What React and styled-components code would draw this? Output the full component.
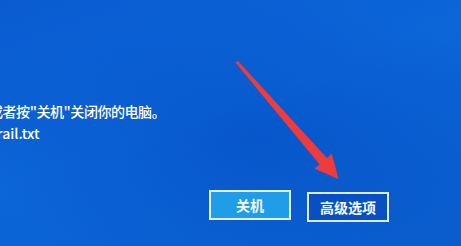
import React from 'react';
import styled, { createGlobalStyle } from 'styled-components';

const GlobalStyle = createGlobalStyle`
html, body {
margin: 0;
padding: 0;
}
body {
font-family: "Noto Sans CJK SC", "Noto Sans", sans-serif;
overflow: hidden;
}
`;

export const Screen = styled.div`
position: relative;
width: 461px;
height: 246px;
overflow: hidden;
display: flex;
flex-direction: column;
background:
  radial-gradient(ellipse 60% 55% at 55% 55%, rgba(4, 70, 190, 0.45), rgba(4, 70, 190, 0) 100%),
  linear-gradient(160deg, #0a5bd0 0%, #0b66d8 45%, #0a5ccc 100%);
color: #ffffff;
`;

export const Message = styled.div`
margin: 101px 0 0 -11px;
display: flex;
flex-direction: column;
gap: 2px;
`;

export const MessageLine = styled.div`
font-size: 14px;
line-height: 20px;
font-weight: 500;
white-space: nowrap;
letter-spacing: ${(p) => p.spacing || '0'};
margin-left: ${(p) => p.indent || '0'};
`;

export const ButtonRow = styled.div`
margin-top: auto;
margin-bottom: 24px;
padding-left: 209px;
display: flex;
gap: 16px;
align-items: flex-start;
`;

export const DialogButton = styled.div`
width: 82px;
height: 30px;
box-sizing: border-box;
display: flex;
align-items: center;
justify-content: center;
border: 2px solid rgba(240, 248, 255, 0.92);
background: ${(p) => (p.primary ? '#1f9de6' : 'rgba(5, 60, 170, 0.35)')};
margin-top: ${(p) => p.offset || '0'};
font-size: 14px;
font-weight: 600;
color: #f4f8ff;
`;

export const ArrowLayer = styled.svg`
position: absolute;
left: 0;
top: 0;
pointer-events: none;
`;

const App = () => {
    return (
        <>
            <GlobalStyle />
            <Screen>
                <Message>
                    <MessageLine spacing="-0.45px">或者按"关机"关闭你的电脑。</MessageLine>
                    <MessageLine indent="-25px">\SrtTrail.txt</MessageLine>
                </Message>
                <ButtonRow>
                    <DialogButton primary>关机</DialogButton>
                    <DialogButton offset="2px">高级选项</DialogButton>
                </ButtonRow>
                <ArrowLayer width="461" height="246" viewBox="0 0 461 246">
                    <polygon
                        points="236,62.7 320,164.5 315,168.5 338,178.5 331.5,154 327,158.5 237.8,61.3"
                        fill="#ef3b3b"
                        stroke="#ef3b3b"
                        strokeWidth="0.8"
                        strokeLinejoin="round"
                    />
                </ArrowLayer>
            </Screen>
        </>
    );
};

export default App;
